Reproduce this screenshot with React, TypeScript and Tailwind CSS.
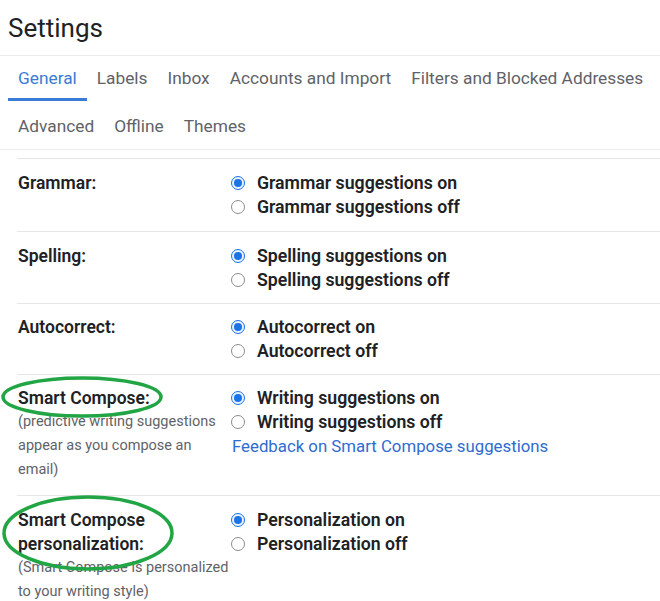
import React from "react";

type Option = { label: string; checked?: boolean };

type Row = {
  title: string[];
  note?: string[];
  options: Option[];
  link?: string;
  pad: string;
};

const rows: Row[] = [
  {
    title: ["Grammar:"],
    options: [{ label: "Grammar suggestions on", checked: true }, { label: "Grammar suggestions off" }],
    pad: "pt-[12px] pb-[12px]",
  },
  {
    title: ["Spelling:"],
    options: [{ label: "Spelling suggestions on", checked: true }, { label: "Spelling suggestions off" }],
    pad: "pt-[12px] pb-[11px]",
  },
  {
    title: ["Autocorrect:"],
    options: [{ label: "Autocorrect on", checked: true }, { label: "Autocorrect off" }],
    pad: "pt-[11px] pb-[11px]",
  },
  {
    title: ["Smart Compose:"],
    note: ["(predictive writing suggestions", "appear as you compose an", "email)"],
    options: [{ label: "Writing suggestions on", checked: true }, { label: "Writing suggestions off" }],
    link: "Feedback on Smart Compose suggestions",
    pad: "pt-[11px] pb-[13px]",
  },
  {
    title: ["Smart Compose", "personalization:"],
    note: ["(Smart Compose is personalized", "to your writing style)"],
    options: [{ label: "Personalization on", checked: true }, { label: "Personalization off" }],
    pad: "pt-[12px] pb-[12px]",
  },
];

const tabsTop = ["General", "Labels", "Inbox", "Accounts and Import", "Filters and Blocked Addresses"];
const tabsBottom = ["Advanced", "Offline", "Themes"];

const Radio = ({ checked }: { checked?: boolean }) =>
  checked ? (
    <span className="flex h-[14px] w-[14px] shrink-0 items-center justify-center rounded-full border-[1.5px] border-[#1a73e8] bg-[#eaf2fd]">
      <span className="h-[8px] w-[8px] rounded-full bg-[#1a73e8]" />
    </span>
  ) : (
    <span className="h-[14px] w-[14px] shrink-0 rounded-full border border-[#8d8d8d] bg-white" />
  );

const Tab = ({ label, active, top }: { label: string; active?: boolean; top?: boolean }) => (
  <div
    className={`shrink-0 whitespace-nowrap px-[10px] text-[17.3px] leading-[20px] ${
      top ? "h-[45px] pt-[12px]" : "pt-[15px]"
    } ${active ? "border-b-[3px] border-[#3a7bd5] text-[#3a7bd5]" : "text-[#5f6368]"}`}
  >
    {label}
  </div>
);

export default function App() {
  return (
    <div className="relative h-[601px] w-[660px] overflow-hidden bg-white font-['Roboto',sans-serif] text-[#202124]">
      <div className="h-[56px] border-b border-[#ececec] pl-[8px] pt-[12px] text-[26px] leading-[32px] text-[#202124]">
        Settings
      </div>

      <div className="flex pl-[8px]">
        {tabsTop.map((t, i) => (
          <Tab key={t} label={t} active={i === 0} top />
        ))}
      </div>
      <div className="flex h-[49px] border-b border-[#ececec] pl-[8px]">
        {tabsBottom.map((t) => (
          <Tab key={t} label={t} />
        ))}
      </div>

      <div className="ml-[17px] mt-[8px]">
        {rows.map((r) => (
          <div key={r.title.join(" ")} className={`flex border-t border-[#e6e6e6] ${r.pad}`}>
            <div className="w-[214px] shrink-0 pl-[1px]">
              {r.title.map((line) => (
                <div key={line} className="text-[17.5px] font-semibold leading-[24px] text-[#202124]">
                  {line}
                </div>
              ))}
              {r.note?.map((line) => (
                <div key={line} className="text-[14.5px] leading-[24px] text-[#5f6368]">
                  {line}
                </div>
              ))}
            </div>
            <div className="flex flex-col">
              {r.options.map((o) => (
                <label key={o.label} className="flex h-[24px] items-center gap-[12px]">
                  <Radio checked={o.checked} />
                  <span className="text-[17.7px] font-semibold text-[#202124]">{o.label}</span>
                </label>
              ))}
              {r.link && (
                <a className="pl-[1px] text-[16.8px] leading-[24px] text-[#2f6bd0]">{r.link}</a>
              )}
            </div>
          </div>
        ))}
      </div>

      {/* hand-drawn annotation circles */}
      <svg className="pointer-events-none absolute left-0 top-0" width="660" height="601">
        <ellipse cx="82" cy="397" rx="79" ry="19" fill="none" stroke="#22a544" strokeWidth="3.5" />
        <ellipse cx="88" cy="533" rx="84" ry="36" fill="none" stroke="#22a544" strokeWidth="3.5" />
      </svg>
    </div>
  );
}
